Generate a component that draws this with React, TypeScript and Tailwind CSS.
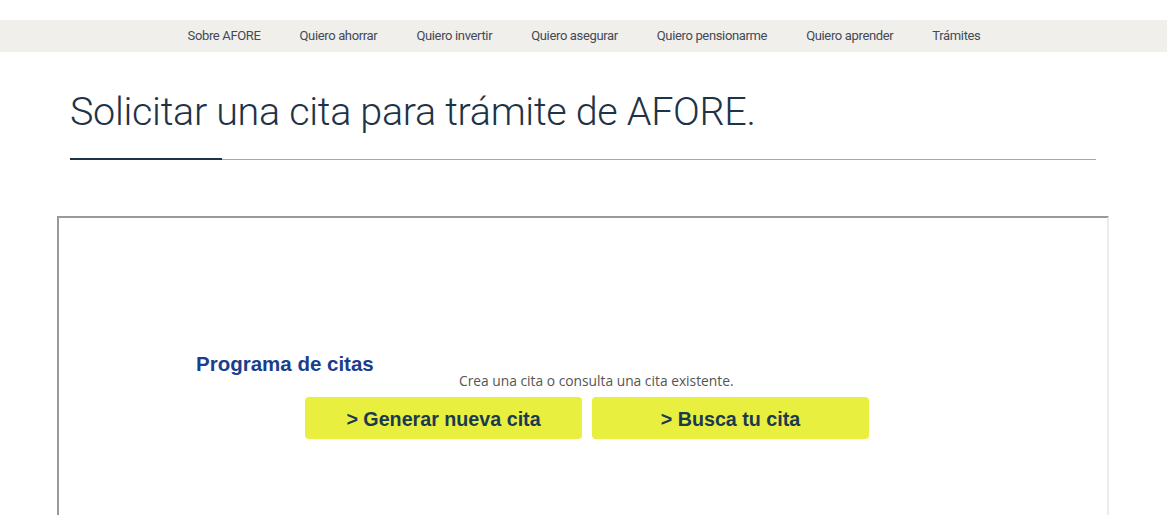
import React from "react";

const navItems = [
  "Sobre AFORE",
  "Quiero ahorrar",
  "Quiero invertir",
  "Quiero asegurar",
  "Quiero pensionarme",
  "Quiero aprender",
  "Trámites",
];

export default function App() {
  return (
    <div className="w-[1167px] h-[515px] overflow-hidden bg-white relative">
      <div className="h-[20px]" />
      <nav className="h-[32px] bg-[#f0efec] flex items-center justify-center gap-[39px] pl-[1px]">
        {navItems.map((t) => (
          <span
            key={t}
            className="text-[13px] text-[#444a55] tracking-[-0.027em]"
            style={{ fontFamily: "Roboto, 'Liberation Sans', sans-serif" }}
          >
            {t}
          </span>
        ))}
      </nav>
      <div className="pl-[70px] pr-[71px]">
        <h1
          className="mt-[36px] text-[39.5px] leading-[48px] font-light text-[#1e3347] tracking-[-0.008em]"
          style={{ fontFamily: "Roboto, 'Liberation Sans', sans-serif" }}
        >
          Solicitar una cita para trámite de AFORE.
        </h1>
        <div className="mt-[22px] flex items-end">
          <div className="w-[152px] h-[2px] bg-[#1e3347]" />
          <div className="flex-1 h-px bg-[#a9a9a2]" />
        </div>
      </div>
      <div className="mt-[56px] ml-[57px] w-[1052px] h-[320px] border-t-2 border-l-2 border-r-2 border-t-[#999999] border-l-[#999999] border-r-[#ececec]">
        <div className="pt-[134px] pl-[137px]">
          <h2
            className="text-[20.5px] leading-[24px] font-bold text-[#1a3d8c]"
            style={{ fontFamily: "'Liberation Sans', Arial, sans-serif" }}
          >
            Programa de citas
          </h2>
          <p
            className="mt-[-4px] ml-[263px] text-[13.8px] leading-[18px] text-[#555555]"
            style={{ fontFamily: "'Open Sans', 'Liberation Sans', sans-serif" }}
          >
            Crea una cita o consulta una cita existente.
          </p>
          <div className="mt-[7px] ml-[109px] flex gap-[10px]">
            {["> Generar nueva cita", "> Busca tu cita"].map((t) => (
              <button
                key={t}
                className="w-[277px] h-[42px] pt-[3px] rounded-[4px] bg-[#e8ef3f] text-[19.7px] font-bold text-[#1b3a4f] flex items-center justify-center"
                style={{ fontFamily: "'Liberation Sans', Arial, sans-serif" }}
              >
                {t}
              </button>
            ))}
          </div>
        </div>
      </div>
    </div>
  );
}
